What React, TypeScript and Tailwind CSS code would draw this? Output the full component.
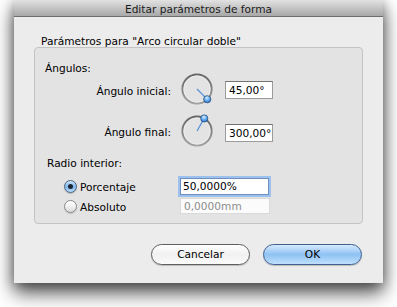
import React from "react";

function Dial({ angle, id }: { angle: number; id: string }) {
  const cx = 16;
  const cy = 16;
  const r = 14.5;
  const a = (angle * Math.PI) / 180;
  const kx = cx + r * Math.cos(a);
  const ky = cy + r * Math.sin(a);
  return (
    <svg width="32" height="32" viewBox="0 0 32 32" className="overflow-visible shrink-0">
      <defs>
        <linearGradient id={`ring-${id}`} x1="0" y1="0" x2="0" y2="1">
          <stop offset="0" stopColor="#666666" />
          <stop offset="1" stopColor="#a2a2a2" />
        </linearGradient>
        <radialGradient id={`knob-${id}`} cx="0.45" cy="0.3" r="0.75">
          <stop offset="0" stopColor="#d9efff" />
          <stop offset="0.45" stopColor="#6fb3f5" />
          <stop offset="1" stopColor="#1f68c8" />
        </radialGradient>
      </defs>
      <circle cx={cx} cy={cy} r={14.6} fill="none" stroke={`url(#ring-${id})`} strokeWidth="2" />
      <circle cx={cx} cy={cy} r={13.2} fill="none" stroke="#f4f4f4" strokeWidth="0.8" opacity="0.8" />
      <line x1={cx} y1={cy} x2={kx} y2={ky} stroke="#5b93d6" strokeWidth="1.3" />
      <circle cx={kx} cy={ky} r="3.6" fill={`url(#knob-${id})`} stroke="#2b4f7e" strokeWidth="0.8" />
    </svg>
  );
}

function Radio({ checked }: { checked: boolean }) {
  if (checked) {
    return (
      <div className="w-[13px] h-[13px] rounded-full border border-[#4d6482] bg-linear-to-b from-[#cfe6fb] via-[#7fb6ec] to-[#b5dafb] flex items-center justify-center shrink-0 shadow-[0_1px_1px_rgba(0,0,0,0.2)]">
        <div className="w-[5px] h-[5px] rounded-full bg-[#1c2433]" />
      </div>
    );
  }
  return (
    <div className="w-[13px] h-[13px] rounded-full border border-[#8a8a8a] bg-linear-to-b from-[#ffffff] via-[#f0f0f0] to-[#d9d9d9] shrink-0 shadow-[0_1px_1px_rgba(0,0,0,0.15)]" />
  );
}

export default function App() {
  return (
    <div className="w-[397px] h-[307px] bg-white overflow-hidden font-['DejaVu_Sans',sans-serif] text-[10.6px] text-black">
      <div className="ml-[14px] w-[369px] h-[283px] bg-[#ececec] flex flex-col shadow-[0_10px_18px_rgba(0,0,0,0.65),0_2px_12px_rgba(0,0,0,0.35)]">
        <div className="h-[17px] border-b border-[#6e6e6e] bg-linear-to-b from-[#e2e2e2] to-[#a8a8a8] text-center leading-[16px] pt-[1px] text-[#1a1a1a]">
          Editar parámetros de forma
        </div>
        <div className="flex flex-col px-[20px]">
          <div className="mt-[18px] pl-[7px] h-[12px] leading-[12px]">
            Parámetros para "Arco circular doble"
          </div>
          <div className="h-[177px] rounded-[4px] border border-[#c3c3c3] bg-[#e3e3e3] flex flex-col">
            <div className="mt-[14px] pl-[10px] h-[12px] leading-[12px]">Ángulos:</div>
            <div className="mt-[-1px] h-[32px] flex items-center">
              <div className="w-[136px] text-right leading-[12px] mt-[3px]">Ángulo inicial:</div>
              <div className="ml-[10px]">
                <Dial angle={45} id="a" />
              </div>
              <div className="ml-[12px] mt-[2px] w-[48px] h-[18px] bg-white border border-[#9b9b9b] border-t-[#727272] pl-[3px] leading-[16px]">
                45,00°
              </div>
            </div>
            <div className="mt-[10px] h-[32px] flex items-center">
              <div className="w-[136px] text-right leading-[12px] mt-[1px]">Ángulo final:</div>
              <div className="ml-[10px]">
                <Dial angle={-60} id="b" />
              </div>
              <div className="ml-[12px] mt-[3px] w-[48px] h-[18px] bg-white border border-[#9b9b9b] border-t-[#727272] pl-[3px] leading-[16px]">
                300,00°
              </div>
            </div>
            <div className="mt-[10px] pl-[12px] h-[12px] leading-[12px]">Radio interior:</div>
            <div className="mt-[8px] h-[18px] flex items-center">
              <div className="w-[145px] pl-[29px] flex items-center">
                <Radio checked />
                <span className="ml-[3px] leading-[12px] mt-[1px]">Porcentaje</span>
              </div>
              <div className="w-[89px] h-[17px] bg-white border border-[#6f8fbf] shadow-[0_0_0_2px_#9cc1ee] pl-[2px] leading-[15px]">
                50,0000%
              </div>
            </div>
            <div className="mt-[2px] h-[18px] flex items-center">
              <div className="w-[145px] pl-[29px] flex items-center">
                <Radio checked={false} />
                <span className="ml-[3px] leading-[12px] mt-[1px]">Absoluto</span>
              </div>
              <div className="w-[90px] h-[16px] bg-[#fbfbfb] border border-[#dadada] pl-[3px] leading-[14px] text-[#8c8c8c]">
                0,0000mm
              </div>
            </div>
          </div>
          <div className="mt-[20px] flex justify-end gap-[13px] pr-[1px]">
            <div className="w-[99px] h-[21px] rounded-full border border-[#5f5f5f] bg-linear-to-b from-[#ffffff] via-[#f1f1f1] to-[#fbfbfb] text-center leading-[19px] shadow-[0_1px_1px_rgba(0,0,0,0.2)]">
              Cancelar
            </div>
            <div className="w-[99px] h-[21px] rounded-full border border-[#3f5f8f] bg-linear-to-b from-[#d6eafd] via-[#8ec2f3] to-[#bfe0fd] text-center leading-[19px] shadow-[0_1px_1px_rgba(0,0,0,0.2)]">
              OK
            </div>
          </div>
        </div>
      </div>
    </div>
  );
}
